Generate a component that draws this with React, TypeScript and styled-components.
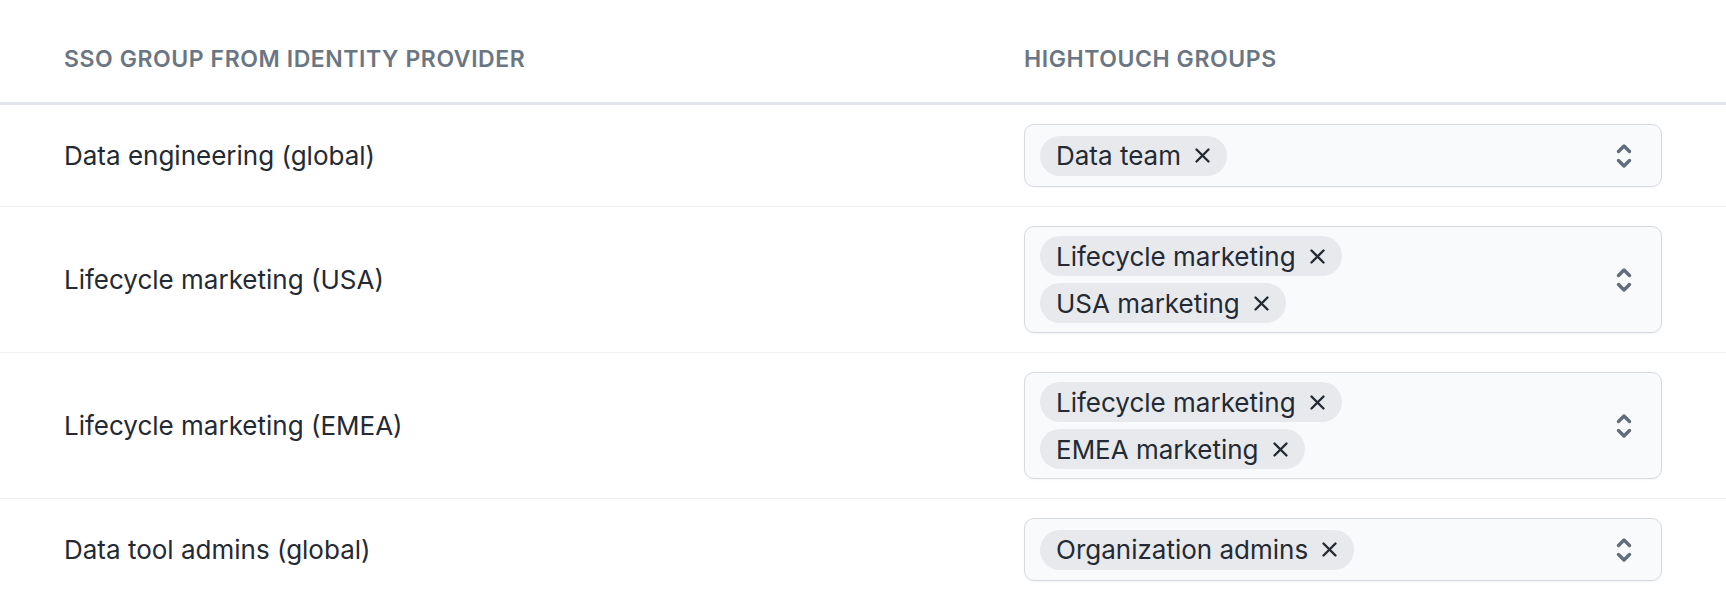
import React from 'react';
import styled, { createGlobalStyle } from 'styled-components';

/* ─── Data ────────────────────────────────────────────────────────── */
interface Mapping {
  sso: string;
  groups: string[];
}

const MAPPINGS: Mapping[] = [
  { sso: 'Data engineering (global)', groups: ['Data team'] },
  { sso: 'Lifecycle marketing (USA)', groups: ['Lifecycle marketing', 'USA marketing'] },
  { sso: 'Lifecycle marketing (EMEA)', groups: ['Lifecycle marketing', 'EMEA marketing'] },
  { sso: 'Data tool admins (global)', groups: ['Organization admins'] },
];

/* ─── Styled ──────────────────────────────────────────────────────── */
const GlobalStyle = createGlobalStyle`
  html, body {
    margin: 0;
    padding: 0;
    background: #ffffff;
    font-family: Inter, "Noto Sans", "Liberation Sans", sans-serif;
    -webkit-font-smoothing: antialiased;
  }
`;

const Table = styled.div`
  display: grid;
  grid-template-columns: 960px 1fr;
  width: 1726px;
`;

const HeadCell = styled.div`
  padding: 44px 64px 28px;
  font-size: 23px;
  line-height: 30px;
  font-weight: 600;
  letter-spacing: 0.025em;
  text-transform: uppercase;
  color: #6b7684;
  border-bottom: 3px solid #e1e5ea;
`;

const Cell = styled.div<{ $last?: boolean }>`
  padding: 19px 64px;
  display: flex;
  align-items: center;
  border-bottom: ${({ $last }) => ($last ? 'none' : '1px solid #eff1f4')};
`;

const GroupName = styled.span`
  font-size: 26px;
  line-height: 34px;
  color: #242a33;
`;

const SelectBox = styled.div`
  flex: 1;
  min-height: 63px;
  box-sizing: border-box;
  display: flex;
  align-items: center;
  justify-content: space-between;
  padding: 9px 29px 9px 15px;
  background: #f9fafb;
  border: 1px solid #d6dae0;
  border-radius: 10px;
  box-shadow: 0 1px 2px rgba(16, 24, 40, 0.04);
`;

const ChipList = styled.div`
  display: flex;
  flex-direction: column;
  align-items: flex-start;
  gap: 7px;
`;

const Chip = styled.span`
  display: inline-flex;
  align-items: center;
  gap: 13px;
  height: 40px;
  padding: 0 16px;
  border-radius: 999px;
  background: #e7e9ed;
  font-size: 26px;
  color: #242a33;
  white-space: nowrap;
`;

const RemoveIcon = styled.svg`
  width: 17px;
  height: 17px;
  flex: none;
`;

const ChevronIcon = styled.svg`
  width: 16px;
  height: 26px;
  flex: none;
`;

/* ─── Component ──────────────────────────────────────────────────── */
const Remove = () => (
  <RemoveIcon viewBox="0 0 17 17" fill="none" stroke="#242a33" strokeWidth={2.4} strokeLinecap="round">
    <path d="M2.5 2.5l12 12M14.5 2.5l-12 12" />
  </RemoveIcon>
);

const Chevrons = () => (
  <ChevronIcon viewBox="0 0 16 26" fill="none" stroke="#616d7c" strokeWidth={3.4} strokeLinecap="round" strokeLinejoin="round">
    <path d="M2.5 8.5L8 3l5.5 5.5" />
    <path d="M2.5 17.5L8 23l5.5-5.5" />
  </ChevronIcon>
);

export default function App() {
  return (
    <>
      <GlobalStyle />
      <Table>
        <HeadCell>SSO group from identity provider</HeadCell>
        <HeadCell>Hightouch groups</HeadCell>
        {MAPPINGS.map((m, i) => {
          const last = i === MAPPINGS.length - 1;
          return (
            <React.Fragment key={m.sso}>
              <Cell $last={last}>
                <GroupName>{m.sso}</GroupName>
              </Cell>
              <Cell $last={last}>
                <SelectBox>
                  <ChipList>
                    {m.groups.map((g) => (
                      <Chip key={g}>
                        {g}
                        <Remove />
                      </Chip>
                    ))}
                  </ChipList>
                  <Chevrons />
                </SelectBox>
              </Cell>
            </React.Fragment>
          );
        })}
      </Table>
    </>
  );
}
